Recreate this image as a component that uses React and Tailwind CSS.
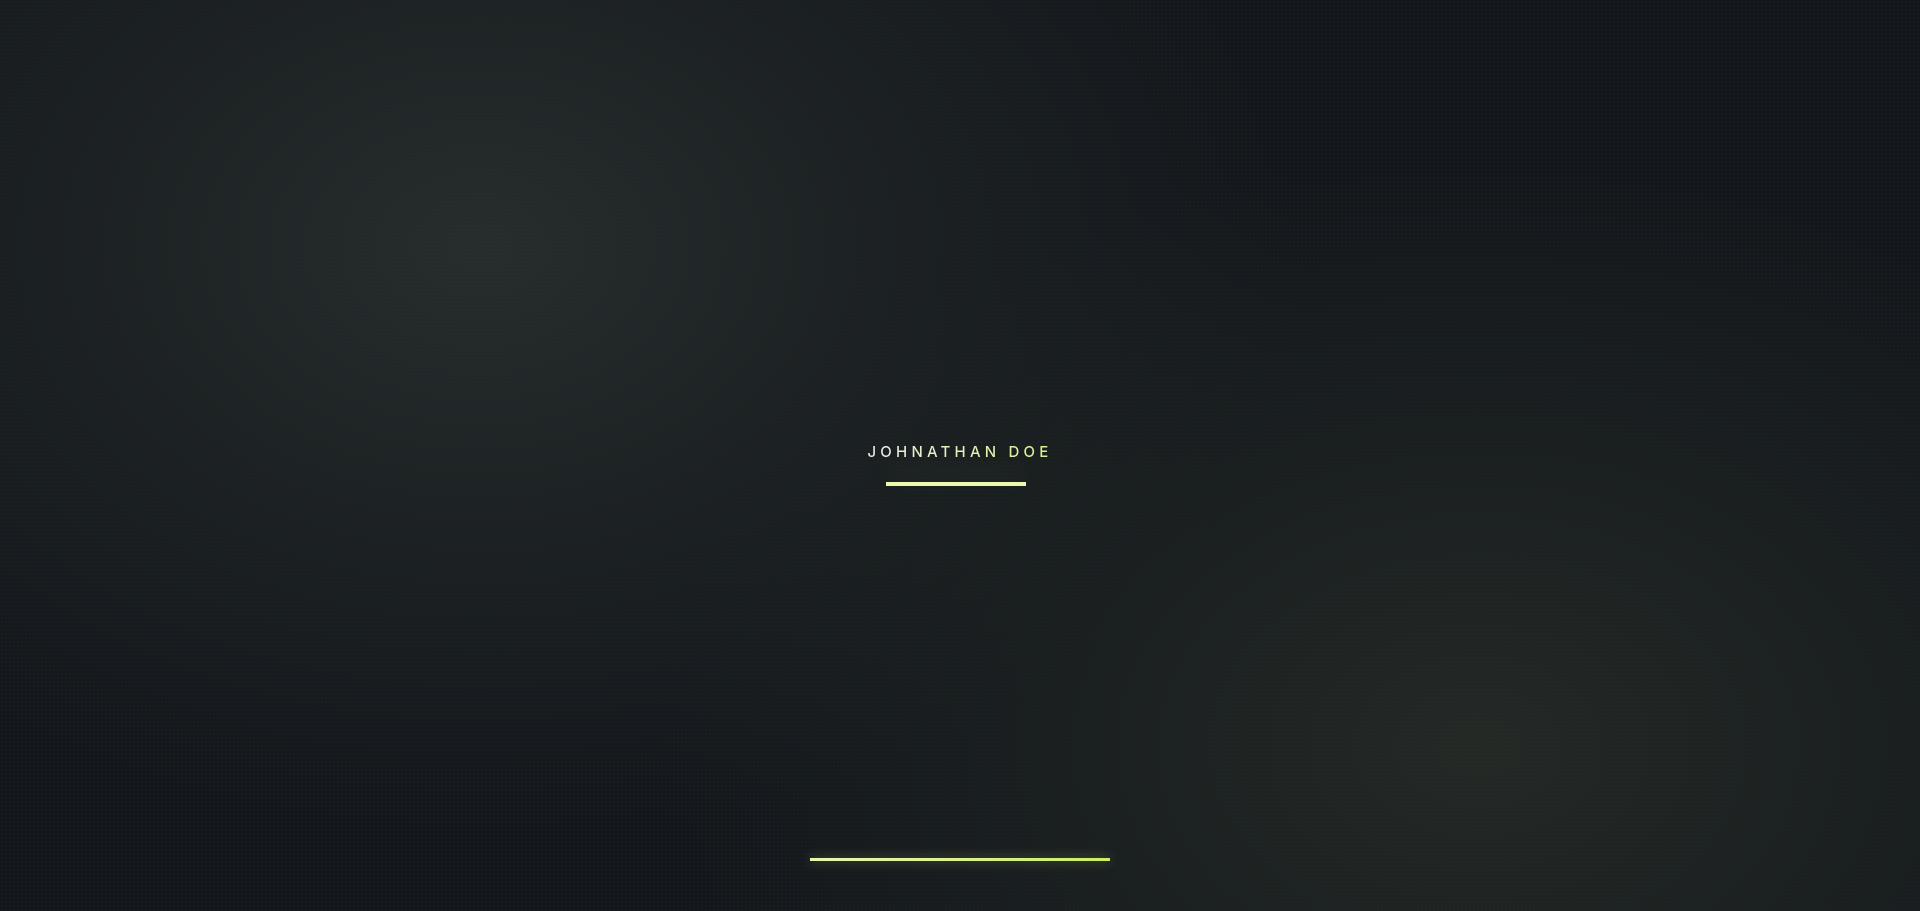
import React from "react";

export default function App() {
  return (
    <div className="relative h-[911px] w-full overflow-hidden bg-[#13171c]">
      <div className="absolute inset-0 bg-[radial-gradient(ellipse_1100px_800px_at_25%_27%,rgba(39,45,45,1)_0%,rgba(31,36,37,0.75)_35%,rgba(19,23,28,0)_75%)]" />
      <div className="absolute inset-0 bg-[radial-gradient(ellipse_1100px_800px_at_77%_82%,rgba(36,41,38,1)_0%,rgba(30,35,34,0.7)_35%,rgba(19,23,28,0)_75%)]" />
      <div className="absolute inset-0 bg-[radial-gradient(rgba(140,160,180,0.02)_1px,transparent_1px)] bg-[size:4px_4px]" />
      <div className="relative flex h-full flex-col items-center font-['Inter',sans-serif]">
        <div className="flex flex-col items-center pt-[444px]">
          <h1 className="bg-gradient-to-r from-[#eceeea] via-[#e6f2b8] to-[#d6f48a] bg-clip-text text-[15px] font-medium leading-none tracking-[0.28em] text-transparent">
            JOHNATHAN DOE
          </h1>
          <div className="mr-[8px] mt-[23px] h-1 w-[140px] bg-[#ecf8ad] shadow-[0_-10px_24px_rgba(217,240,150,0.16)]" />
        </div>
        <div className="flex-1" />
        <div className="mb-[50px] h-[3px] w-[300px] bg-gradient-to-r from-[#e9f7b2] to-[#cbef62] shadow-[0_0_12px_rgba(214,245,130,0.4)]" />
      </div>
    </div>
  );
}
